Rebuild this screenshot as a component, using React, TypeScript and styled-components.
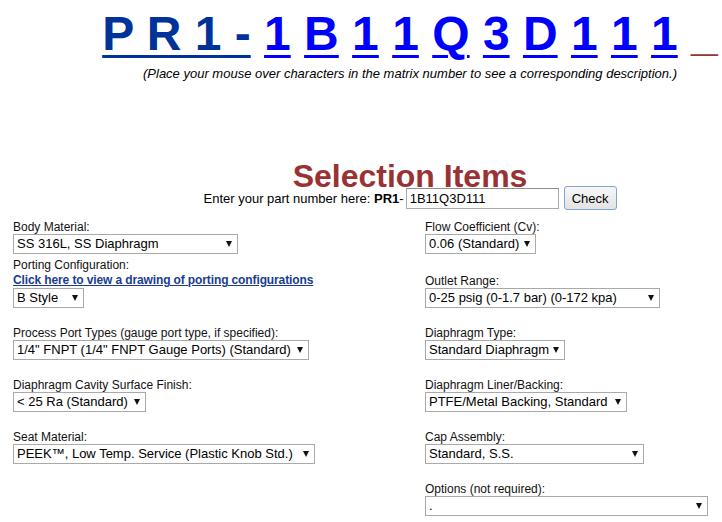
import React from "react";
import styled, { createGlobalStyle } from "styled-components";

const GlobalStyle = createGlobalStyle`
  html, body {
    margin: 0;
    padding: 0;
    background: #fff;
    overflow: hidden;
  }
  body {
    font-family: "Liberation Sans", Arial, sans-serif;
    color: #000;
  }
`;

/* ─── Page ─── */

const Page = styled.div`
  width: 820px;
`;

const Matrix = styled.div`
  padding-top: 6px;
  text-align: center;
  white-space: nowrap;
  font-size: 48px;
  font-weight: bold;
  line-height: 55px;
`;

const Prefix = styled.a`
  color: #003399;
  text-decoration: underline;
  text-decoration-thickness: 3px;
  text-underline-offset: 5px;
`;

const CodeChar = styled.a`
  color: #0000ff;
  text-decoration: underline;
  text-decoration-thickness: 3px;
  text-underline-offset: 5px;
  cursor: pointer;
`;

const Tail = styled.span`
  color: #993333;
`;

const Hint = styled.div`
  margin-top: 5px;
  text-align: center;
  font-size: 13px;
  font-style: italic;
  line-height: 15px;
`;

const Title = styled.h1`
  margin: 86px 0 0;
  text-align: center;
  font-size: 32px;
  font-weight: bold;
  line-height: 18px;
  color: #993333;
`;

const PartRow = styled.div`
  margin-top: 1px;
  height: 24px;
  display: flex;
  align-items: center;
  justify-content: center;
  font-size: 13px;
  b {
    font-weight: bold;
  }
`;

const PartInput = styled.input`
  box-sizing: border-box;
  width: 153px;
  height: 21px;
  margin-left: 2px;
  padding: 0 3px;
  border: 1px solid #a9a9a9;
  border-top-color: #8e8e8e;
  font-family: "Liberation Sans", Arial, sans-serif;
  font-size: 13px;
  color: #000;
  outline: none;
`;

const CheckBtn = styled.button`
  box-sizing: border-box;
  height: 24px;
  margin-left: 5px;
  padding: 0 7px;
  border: 1px solid #7ea6d6;
  border-radius: 3px;
  background: linear-gradient(#f7f7f7, #e3e3e3);
  font-family: "Liberation Sans", Arial, sans-serif;
  font-size: 13px;
  color: #000;
`;

/* ─── Form grid ─── */

const Form = styled.div`
  margin-top: 10px;
  padding-left: 13px;
  display: grid;
  grid-template-columns: 412px 1fr;
  align-items: end;
`;

const Field = styled.div<{ $top: number; $col?: number }>`
  margin-top: ${(p) => p.$top}px;
  grid-column: ${(p) => p.$col ?? "auto"};
`;

const Label = styled.div`
  font-size: 12px;
  line-height: 14px;
  color: #111;
`;

const DrawingLink = styled.a`
  display: block;
  font-size: 12px;
  font-weight: bold;
  line-height: 16px;
  letter-spacing: -0.12px;
  color: #1a3d8f;
  text-decoration: underline;
`;

const SelectWrap = styled.span<{ $w: number }>`
  position: relative;
  display: block;
  width: ${(p) => p.$w}px;
  &::after {
    content: "";
    position: absolute;
    right: 6px;
    top: 7px;
    border-left: 3.5px solid transparent;
    border-right: 3.5px solid transparent;
    border-top: 6px solid #111;
    pointer-events: none;
  }
`;

const Select = styled.select`
  appearance: none;
  -webkit-appearance: none;
  box-sizing: border-box;
  display: block;
  width: 100%;
  height: 20px;
  margin: 0;
  padding: 0 12px 0 3px;
  border: 1px solid #a9a9a9;
  border-radius: 0;
  background: #fff;
  font-family: "Liberation Sans", Arial, sans-serif;
  font-size: 13px;
  line-height: 18px;
  color: #000;
  outline: none;
`;

const Drop: React.FC<{ w: number; value: string }> = ({ w, value }) => (
  <SelectWrap $w={w}>
    <Select defaultValue={value}>
      <option>{value}</option>
    </Select>
  </SelectWrap>
);

const code = "1B11Q3D111";

const left = [
  { label: "Process Port Types (gauge port type, if specified):", value: '1/4" FNPT (1/4" FNPT Gauge Ports) (Standard)', w: 296 },
  { label: "Diaphragm Cavity Surface Finish:", value: "< 25 Ra (Standard)", w: 133 },
  { label: "Seat Material:", value: "PEEK™, Low Temp. Service (Plastic Knob Std.)", w: 302 },
];

const right = [
  { label: "Diaphragm Type:", value: "Standard Diaphragm", w: 140 },
  { label: "Diaphragm Liner/Backing:", value: "PTFE/Metal Backing, Standard", w: 202 },
  { label: "Cap Assembly:", value: "Standard, S.S.", w: 219 },
];

export default function App() {
  return (
    <>
      <GlobalStyle />
      <Page>
        <Matrix>
          <Prefix>P R 1 -</Prefix>
          {code.split("").map((c, i) => (
            <React.Fragment key={i}>
              {" "}
              <CodeChar>{c}</CodeChar>
            </React.Fragment>
          ))}{" "}
          <Tail>_</Tail>
        </Matrix>
        <Hint>(Place your mouse over characters in the matrix number to see a corresponding description.)</Hint>

        <Title>Selection Items</Title>
        <PartRow>
          Enter your part number here:&nbsp;<b>PR1</b>-
          <PartInput defaultValue={code} />
          <CheckBtn>Check</CheckBtn>
        </PartRow>

        <Form>
          <Field $top={0}>
            <Label>Body Material:</Label>
            <Drop w={225} value="SS 316L, SS Diaphragm" />
          </Field>
          <Field $top={0}>
            <Label>Flow Coefficient (Cv):</Label>
            <Drop w={111} value="0.06 (Standard)" />
          </Field>

          <Field $top={4}>
            <Label>Porting Configuration:</Label>
            <DrawingLink>Click here to view a drawing of porting configurations</DrawingLink>
            <Drop w={71} value="B Style" />
          </Field>
          <Field $top={4}>
            <Label>Outlet Range:</Label>
            <Drop w={235} value="0-25 psig (0-1.7 bar) (0-172 kpa)" />
          </Field>

          {left.map((l, i) => (
            <React.Fragment key={l.label}>
              <Field $top={18}>
                <Label>{l.label}</Label>
                <Drop w={l.w} value={l.value} />
              </Field>
              <Field $top={18}>
                <Label>{right[i].label}</Label>
                <Drop w={right[i].w} value={right[i].value} />
              </Field>
            </React.Fragment>
          ))}

          <Field $top={18} $col={2}>
            <Label>Options (not required):</Label>
            <Drop w={283} value="." />
          </Field>
        </Form>
      </Page>
    </>
  );
}
